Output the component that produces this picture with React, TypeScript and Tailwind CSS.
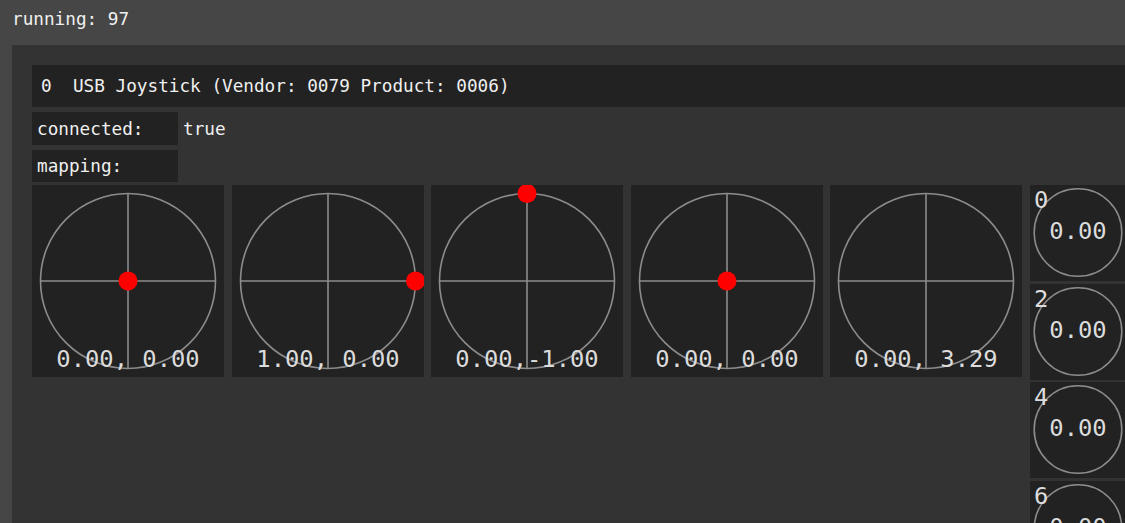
import React from "react";

const FONT = '"DejaVu Sans Mono", "Liberation Mono", monospace';

function Axis({ x, y, label }: { x: number; y: number; label: string }) {
  const cx = 96 + x * 87.5;
  const cy = 96 + y * 87.5;
  return (
    <div className="w-[192px] h-[192px] bg-[#222222] shrink-0 overflow-hidden">
      <svg width="192" height="192" viewBox="0 0 192 192">
        <circle cx="96" cy="96" r="87.5" fill="none" stroke="#8c8c8c" strokeWidth="1.6" />
        <line x1="8.5" y1="96" x2="183.5" y2="96" stroke="#8c8c8c" strokeWidth="1.6" />
        <line x1="96" y1="8.5" x2="96" y2="183.5" stroke="#8c8c8c" strokeWidth="1.6" />
        {Math.abs(y) <= 1.05 && Math.abs(x) <= 1.05 && (
          <circle cx={cx} cy={cy} r="9.5" fill="#ff0000" />
        )}
        <text
          x="96"
          y="182"
          textAnchor="middle"
          fill="#dcdcdc"
          fontSize="23.8"
          fontFamily={FONT}
        >
          {label}
        </text>
      </svg>
    </div>
  );
}

function Button({ n }: { n: number }) {
  return (
    <div className="w-[96px] h-[96px] bg-[#222222] shrink-0">
      <svg width="96" height="96" viewBox="0 0 96 96">
        <circle cx="48" cy="47.5" r="43.8" fill="none" stroke="#8c8c8c" strokeWidth="1.6" />
        <text x="4" y="23" fill="#dcdcdc" fontSize="23.8" fontFamily={FONT}>
          {n}
        </text>
        <text x="48" y="54" textAnchor="middle" fill="#dcdcdc" fontSize="23.8" fontFamily={FONT}>
          0.00
        </text>
      </svg>
    </div>
  );
}

export default function App() {
  const axes = [
    { x: 0, y: 0, label: "0.00, 0.00" },
    { x: 1, y: 0, label: "1.00, 0.00" },
    { x: 0, y: -1, label: "0.00,-1.00" },
    { x: 0, y: 0, label: "0.00, 0.00" },
    { x: 0, y: 3.29, label: "0.00, 3.29" },
  ];
  const buttons = Array.from({ length: 12 }, (_, i) => i);
  return (
    <div className="w-[1125px] h-[523px] overflow-hidden bg-[#464646] text-[#f0f0f0] font-['DejaVu_Sans_Mono','Liberation_Mono',monospace] text-[17.7px] leading-[20px]">
      <div className="h-[45px] pl-[12px] pt-[9px] whitespace-pre">running: 97</div>
      <div className="ml-[12px] w-max bg-[#333333] p-[20px]">
        <div className="h-[42px] bg-[#222222] flex items-center pl-[9px] whitespace-pre">
          0  USB Joystick (Vendor: 0079 Product: 0006)
        </div>
        <div className="mt-[5px] flex items-center h-[33px]">
          <div className="w-[146px] h-full bg-[#222222] flex items-center pl-[5px]">connected:</div>
          <div className="pl-[5px]">true</div>
        </div>
        <div className="mt-[5px] flex items-center h-[32px]">
          <div className="w-[146px] h-full bg-[#222222] flex items-center pl-[5px]">mapping:</div>
        </div>
        <div className="mt-[3px] flex items-start gap-[7.5px]">
          {axes.map((a, i) => (
            <Axis key={i} x={a.x} y={a.y} label={a.label} />
          ))}
          <div className="grid grid-cols-[96px_96px] gap-x-[3px] gap-y-[2.5px]">
            {buttons.map((b) => (
              <Button key={b} n={b} />
            ))}
          </div>
        </div>
      </div>
    </div>
  );
}
